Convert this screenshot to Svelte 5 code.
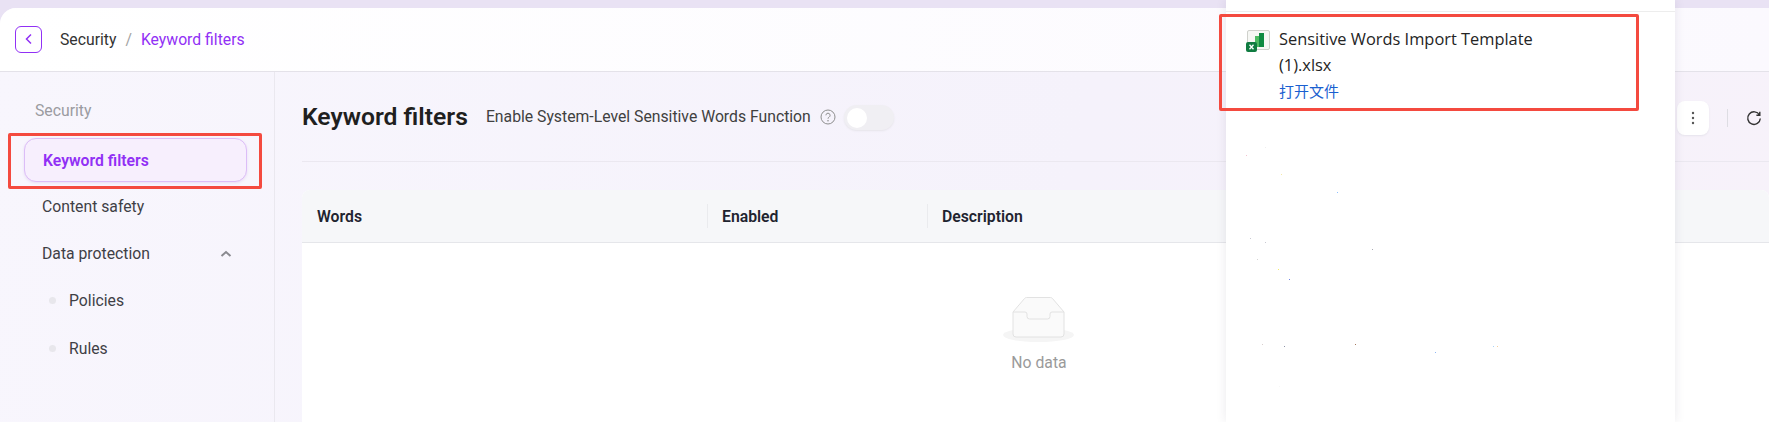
<script>
  const columns = [
    { label: 'Words', width: 405 },
    { label: 'Enabled', width: 220 },
    { label: 'Description', width: 700 }
  ];
  const specks = [
    [1246,155,'#f3c3cf'],[1265,147,'#efefef'],[1281,174,'#f5e9a8'],[1337,192,'#8fc0ff'],[1250,238,'#c9c9d2'],[1265,242,'#c9c9d2'],
    [1372,249,'#a9a9b2'],[1257,259,'#d5d5d5'],[1278,269,'#f4ec6a'],[1289,279,'#6f83e8'],[1262,344,'#d8cfcf'],[1284,346,'#8f94a8'],
    [1355,344,'#a5785f'],[1435,352,'#8fb8f5'],[1493,346,'#a9d2f7'],[1497,346,'#f5cf9f'],[1279,386,'#f7f7f7']
  ];
</script>

<div class="page">
  <div class="card">
    <header class="topbar">
      <button class="back" aria-label="Back">
        <svg width="10" height="12" viewBox="0 0 10 12"><path d="M7 1.500 2.500 6 7 10.500" /></svg>
      </button>
      <nav class="crumbs">
        <span>Security</span>
        <span class="slash">/</span>
        <span class="current">Keyword filters</span>
      </nav>
    </header>

    <div class="body">
      <aside class="side">
        <div class="group">Security</div>
        <div class="item active">Keyword filters</div>
        <div class="item">Content safety</div>
        <div class="item parent">
          <span>Data protection</span>
          <svg width="12" height="8" viewBox="0 0 12 8"><path d="M1.500 6 6 2l4.500 4" /></svg>
        </div>
        <div class="sub"><i></i>Policies</div>
        <div class="sub"><i></i>Rules</div>
      </aside>

      <main class="main">
        <div class="titlebar">
          <h1>Keyword filters</h1>
          <span class="enable">Enable System-Level Sensitive Words Function</span>
          <svg class="help" width="16" height="16" viewBox="0 0 16 16">
            <circle cx="8" cy="8" r="7" />
            <path d="M5.900 6.300a2.100 2.100 0 1 1 3.200 1.800c-.7.400-1.100.8-1.100 1.600" />
            <circle class="dot" cx="8" cy="11.800" r=".8" />
          </svg>
          <span class="switch"><b></b></span>
          <div class="tools">
            <button class="more" aria-label="More">
              <svg width="4" height="14" viewBox="0 0 4 14"><circle cx="2" cy="2" r="1.200" /><circle cx="2" cy="7" r="1.200" /><circle cx="2" cy="12" r="1.200" /></svg>
            </button>
            <span class="sep"></span>
            <svg class="refresh" width="16" height="16" viewBox="0 0 16 16"><path d="M13.500 5A6.300 6.300 0 1 0 14.300 8.500M13.800 1.800V5.200H10.400" /></svg>
          </div>
        </div>

        <section class="table">
          <div class="thead">
            {#each columns as col, i}
              <div class="th" class:divided={i > 0} style="width:{col.width}px">{col.label}</div>
            {/each}
          </div>
          <div class="empty">
            <svg width="72" height="46" viewBox="0 0 72 46">
              <ellipse class="shadow" cx="35.500" cy="39" rx="35.500" ry="7" />
              <path class="box" d="M10 16 21.500 2.500a3 3 0 0 1 2-1h24a3 3 0 0 1 2 1L61 16v22a3 3 0 0 1-3 3H13a3 3 0 0 1-3-3Z" />
              <path class="tray" d="M10 16h12a2 2 0 0 1 2 2v2.500a2.500 2.500 0 0 0 2.500 2.500h18a2.500 2.500 0 0 0 2.500-2.500V18a2 2 0 0 1 2-2h12" />
            </svg>
            <span>No data</span>
          </div>
        </section>
      </main>
    </div>
  </div>

  <div class="popup">
    <div class="popup-rule"></div>
    <div class="download">
      <svg class="xls" width="26" height="24" viewBox="0 0 26 24">
        <rect x="2.500" y="1.500" width="22" height="19" rx="1.500" fill="#f6f7f4" stroke="#cfd1cc" />
        <rect x="10" y="7" width="5" height="11" fill="#4dbb62" />
        <rect x="14" y="4" width="5" height="14" fill="#0f8a41" />
        <rect x="1" y="13" width="11" height="10" rx="2" fill="#107c41" />
        <path d="M4.500 15.800l4 4.500M8.500 15.800l-4 4.500" stroke="#fff" stroke-width="1.300" />
      </svg>
      <div class="file">
        <div>Sensitive Words Import Template<br />(1).xlsx</div>
        <a href="#open">打开文件</a>
      </div>
    </div>
    {#each specks as s}
      <span class="speck" style="left:{s[0] - 1226}px;top:{s[1]}px;background:{s[2]}"></span>
    {/each}
  </div>

  <div class="mark mark-side"></div>
  <div class="mark mark-file"></div>
</div>

<style>
  :global(body) { margin: 0; }
  .page {
    position: relative;
    height: 422px;
    overflow: hidden;
    padding-top: 8px;
    box-sizing: border-box;
    background: #e9e2f4;
    font-family: Roboto, "Liberation Sans", sans-serif;
    font-size: 15.75px;
    color: #262626;
  }
  .card {
    height: 414px;
    border-radius: 16px 0 0 0;
    background: linear-gradient(100deg, #f8f6fd, #f5f2fb 60%, #f7f2fa);
    overflow: hidden;
  }
  .topbar {
    display: flex;
    align-items: center;
    height: 64px;
    padding-left: 15px;
    padding-bottom: 1px;
    box-sizing: border-box;
    background: linear-gradient(90deg, #fff, #fbf9fe);
    border-bottom: 1px solid #e4e2e9;
  }
  .back {
    display: flex;
    align-items: center;
    justify-content: center;
    width: 27px;
    height: 27px;
    padding: 0;
    border: 1px solid #9130f5;
    border-radius: 6px;
    background: #fff;
  }
  .back path { fill: none; stroke: #9130f5; stroke-width: 1.500; }
  .crumbs { display: flex; gap: 9px; margin-left: 18px; color: #333; }
  .slash { color: #a3a3a3; }
  .current { color: #9130f5; }
  .body { display: flex; height: 350px; overflow: hidden; }
  .side {
    width: 275px;
    flex: none;
    box-sizing: border-box;
    padding: 29px 0 0 24px;
    border-right: 1px solid #eae8ef;
    color: #3f3f46;
  }
  .group { height: 20px; line-height: 20px; margin: 0 0 17px 11px; color: #9b9ba1; }
  .item, .sub { display: flex; align-items: center; height: 47.300px; margin-right: 27px; }
  .item { padding-left: 18px; }
  .active {
    height: 44px;
    margin: 0 27px 0.600px 0;
    box-sizing: border-box;
    border: 1px solid #dcbdf7;
    border-radius: 12px;
    background: #f7effd;
    box-shadow: 0 1px 3px #e8dcf5;
    color: #9130f5;
    font-weight: 600;
  }
  .parent { justify-content: space-between; padding-right: 15px; }
  .parent path { fill: none; stroke: #8a8a90; stroke-width: 2; }
  .sub { padding-left: 25px; }
  .sub i { width: 7px; height: 7px; margin-right: 13px; border-radius: 50%; background: #e8e7ec; }
  .main { flex: 1; min-width: 0; padding-left: 27px; }
  .titlebar {
    display: flex;
    align-items: center;
    height: 90px;
    box-sizing: border-box;
    border-bottom: 1px solid #ebe8f0;
  }
  h1 { margin: 0; font-size: 24.700px; line-height: 32px; font-weight: 600; color: #1f1f1f; }
  .enable { margin-left: 18px; color: #404040; }
  .help { margin: 1px 0 0 9px; }
  .help circle, .help path { fill: none; stroke: #8e8e8e; stroke-width: 1; }
  .help .dot { fill: #8e8e8e; stroke: none; }
  .switch {
    display: flex;
    align-items: center;
    width: 50px;
    height: 25px;
    margin: 2px 0 0 8px;
    padding-left: 3px;
    box-sizing: border-box;
    border-radius: 13px;
    background: #f0eff3;
    box-shadow: 0 1px 2px #e6e4ea;
  }
  .switch b { width: 20px; height: 20px; border-radius: 50%; background: #fff; }
  .tools { display: flex; align-items: center; margin: 2px 7px 0 auto; }
  .more {
    display: flex;
    align-items: center;
    justify-content: center;
    width: 32px;
    height: 34px;
    padding: 0;
    border: 0;
    border-radius: 8px;
    background: #fff;
    box-shadow: 0 1px 2px #e6e3ec;
  }
  .more circle { fill: #555; }
  .sep { width: 1px; height: 18px; margin: 0 18px; background: #dedde3; }
  .refresh path { fill: none; stroke: #333; stroke-width: 1.400; }
  .table {
    margin-top: 28px;
    height: 240px;
    border-radius: 8px 8px 0 0;
    background: #fff;
    overflow: hidden;
  }
  .thead {
    display: flex;
    height: 53px;
    background: #f6f7f9;
    border-bottom: 1px solid #e5e6ea;
    box-sizing: border-box;
  }
  .th {
    position: relative;
    display: flex;
    align-items: center;
    flex: none;
    box-sizing: border-box;
    padding-left: 15px;
    font-weight: 600;
    color: #1f2430;
  }
  .divided::before {
    content: "";
    position: absolute;
    left: 0;
    top: 14px;
    width: 1px;
    height: 24px;
    background: #eaebee;
  }
  .empty {
    display: flex;
    flex-direction: column;
    align-items: center;
    gap: 11px;
    width: 1474px;
    padding-top: 53px;
    color: #9a9a9a;
  }
  .shadow { fill: #f5f5f5; }
  .box { fill: #fafafa; stroke: #e2e2e2; stroke-width: 1; }
  .tray { fill: none; stroke: #e2e2e2; stroke-width: 1; }
  .popup {
    position: absolute;
    left: 1226px;
    top: 0;
    width: 449px;
    height: 422px;
    background: #fff;
    box-shadow: 0 0 10px rgba(60, 50, 80, 0.1);
  }
  .popup-rule { height: 11px; border-bottom: 1px solid #ededed; }
  .download { display: flex; gap: 8px; padding: 14px 0 0 19px; }
  .xls { flex: none; margin-top: 3px; }
  .file {
    font: 16.400px/26px "Open Sans", "Noto Sans", sans-serif;
    color: #242424;
  }
  .file a {
    display: block;
    margin-top: 3px;
    font: 15px/20px "Noto Sans CJK SC", sans-serif;
    color: #1a5fd0;
    text-decoration: none;
  }
  .speck { position: absolute; width: 1px; height: 1px; }
  .mark {
    position: absolute;
    box-sizing: border-box;
    border: 3px solid #f44a3f;
    border-radius: 2px;
    pointer-events: none;
  }
  .mark-side { left: 8px; top: 133px; width: 254px; height: 56px; }
  .mark-file { left: 1219px; top: 14px; width: 420px; height: 97px; }
</style>
